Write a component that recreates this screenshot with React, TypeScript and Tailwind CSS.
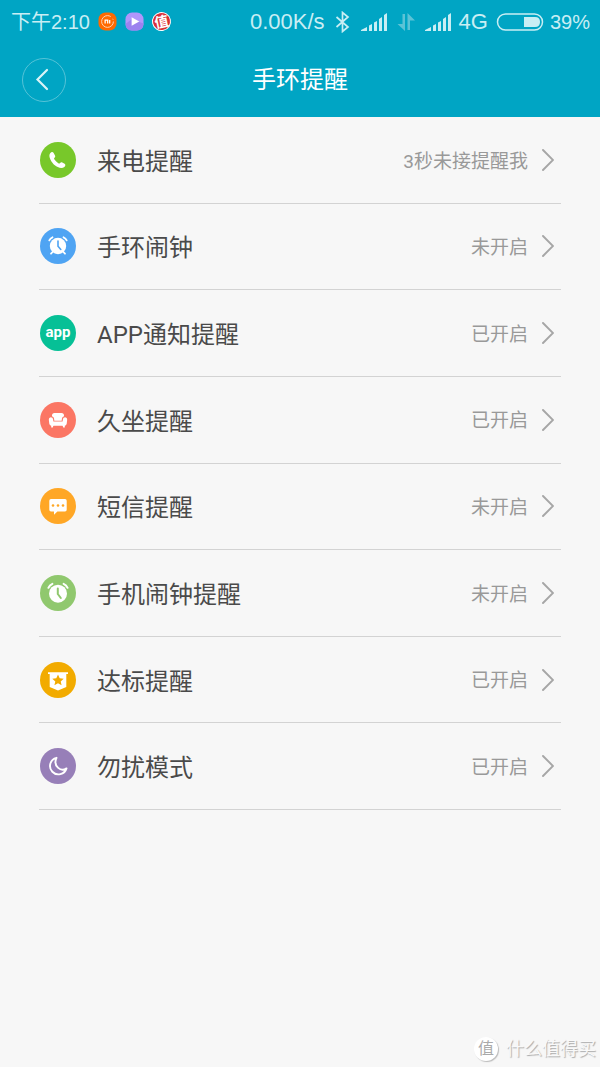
import type { ReactNode } from "react";

type Reminder = {
  id: string;
  title: string;
  status: string;
  icon: ReactNode;
};

function Disc({ color, children }: { color: string; children?: ReactNode }) {
  return (
    <svg viewBox="0 0 36 36" className="size-9 shrink-0" aria-hidden="true">
      <circle cx="18" cy="18" r="18" fill={color} />
      {children}
    </svg>
  );
}

function PhoneIcon() {
  return (
    <Disc color="#78c82a">
      <path
        d="M10.2 11.2c.9-1.3 2.5-1.7 3.3-.5l1.5 2.7c.5 1 .2 1.7-.5 2.3-.6.5-.6 1 0 1.9 1 1.5 2.3 2.7 3.8 3.6.8.5 1.3.4 1.8-.2.6-.7 1.3-.9 2.2-.5l2.3 1.3c1.2.8.9 2.3-.3 3.2-1.6 1.3-3.9 1.3-6.6.1-4-1.8-7.3-6.4-8.1-9.9-.4-1.7-.1-3 .6-4z"
        fill="#fff"
      />
    </Disc>
  );
}

function BandAlarmIcon() {
  return (
    <Disc color="#4fa4f3">
      <circle cx="18" cy="18" r="8.2" fill="#fff" />
      <g fill="none" stroke="#fff" strokeLinecap="round">
        <path d="M9.3 12.4q1-2.2 3.2-3.1M26.7 12.4q-1-2.2-3.2-3.1" strokeWidth="1.8" />
        <path d="M12.6 24L11 25.7M23.4 24l1.6 1.7" strokeWidth="1.8" />
      </g>
      <path d="M18 13v5.3l2.8 3.2" fill="none" stroke="#4fa4f3" strokeWidth="1.6" strokeLinecap="round" />
    </Disc>
  );
}

function AppIcon() {
  return (
    <span className="flex size-9 shrink-0 items-center justify-center rounded-full bg-[#06c096] pb-0.5 font-[Roboto] text-[15px] font-bold text-white">
      app
    </span>
  );
}

function SofaIcon() {
  return (
    <Disc color="#fb7664">
      <g fill="#fff">
        <path d="M14.5 11h7q2.5 0 2.5 2.5v.7q-2 .6-2.1 2.6l-.2 2h-7.4l-.2-2q-.1-2-2.1-2.6v-.7q0-2.5 2.5-2.5z" />
        <path d="M10.8 15.2q2.1 0 2.3 2.1l.3 2.3h9.2l.3-2.3q.2-2.1 2.3-2.1 2 .2 2 2.200l-.5 4.300q-.3 2-2.300 2H11.600q-2 0-2.300-2l-.5-4.300q0-2 2-2.200z" />
        <path d="M11.2 23h2.4l-.8 2.6h-1.600zM24.800 23h-2.400l.8 2.600h1.600z" />
      </g>
    </Disc>
  );
}

function MessageIcon() {
  return (
    <Disc color="#ffa726">
      <path
        d="M11 11h14q1.7 0 1.7 1.7v9q0 1.7-1.7 1.7h-7.6L14 26.8v-3.4h-3q-1.7 0-1.7-1.7v-9Q9.3 11 11 11z"
        fill="#fff"
      />
      <g fill="#ffa726">
        <circle cx="13" cy="17.5" r="1.3" />
        <circle cx="18" cy="17.5" r="1.3" />
        <circle cx="23" cy="17.5" r="1.3" />
      </g>
    </Disc>
  );
}

function PhoneAlarmIcon() {
  return (
    <Disc color="#90c86e">
      <circle cx="18" cy="18.7" r="9" fill="#fff" />
      <path
        d="M8.4 12.8q1.2-2.8 4-4M27.6 12.8q-1.2-2.8-4-4"
        fill="none"
        stroke="#fff"
        strokeWidth="2"
        strokeLinecap="round"
      />
      <path d="M17.8 13.5V19l3 4" fill="none" stroke="#90c86e" strokeWidth="2" strokeLinecap="round" />
    </Disc>
  );
}

function GoalIcon() {
  return (
    <Disc color="#f2ab00">
      <path d="M8 10.2h20V12h-1.7v13L18 28.5 9.700 25V12H8z" fill="#fff" />
      <path
        d="M18 12.6l1.7 3.7 4 .4-3 2.7.9 3.9-3.6-2-3.6 2 .9-3.9-3-2.700 4-.4z"
        fill="#f2ab00"
      />
    </Disc>
  );
}

function MoonIcon() {
  return (
    <Disc color="#977fb8">
      <path
        d="M16.5 9.8a8.4 8.4 0 1 0 10 10.6c-2.600 1.700-6 1.600-8.300-.5-2.900-2.600-3.300-6.700-1.700-10.100z"
        fill="none"
        stroke="#fff"
        strokeWidth="1.9"
        strokeLinejoin="round"
      />
    </Disc>
  );
}

const REMINDERS: Reminder[] = [
  { id: "call", title: "来电提醒", status: "3秒未接提醒我", icon: <PhoneIcon /> },
  { id: "band-alarm", title: "手环闹钟", status: "未开启", icon: <BandAlarmIcon /> },
  { id: "app", title: "APP通知提醒", status: "已开启", icon: <AppIcon /> },
  { id: "sit", title: "久坐提醒", status: "已开启", icon: <SofaIcon /> },
  { id: "sms", title: "短信提醒", status: "未开启", icon: <MessageIcon /> },
  { id: "phone-alarm", title: "手机闹钟提醒", status: "未开启", icon: <PhoneAlarmIcon /> },
  { id: "goal", title: "达标提醒", status: "已开启", icon: <GoalIcon /> },
  { id: "dnd", title: "勿扰模式", status: "已开启", icon: <MoonIcon /> },
];

function Signal() {
  return (
    <svg viewBox="0 0 26 18" className="h-[18px] w-[26px]" fill="currentColor" aria-hidden="true">
      <path d="M0 18v-1l6-3v4zM8 12.5l3-1.500v7H8zM13 9.500L16 8v10h-3zM18 6l3-2v14h-3zM23 2l3-2v18h-3z" />
    </svg>
  );
}

function StatusBar() {
  return (
    <div className="flex h-[43px] items-center justify-between pl-[11px] pr-[10px] text-[#c9eef4]">
      <div className="flex items-center gap-2">
        <span className="text-xl">下午2:10</span>
        <svg viewBox="0 0 20 20" className="size-[19px]" aria-hidden="true">
          <rect x=".5" y=".5" width="19" height="19" rx="7.5" fill="#ff6a00" />
          <circle cx="10" cy="10" r="6.2" fill="none" stroke="#ffd9bd" strokeWidth="1" strokeDasharray="32 3 1 3" />
          <path d="M7.5 12V8.600h2.700V12M12.300 8.500V12" fill="none" stroke="#fff" strokeWidth="1.3" />
        </svg>
        <svg viewBox="0 0 20 20" className="size-[19px]" aria-hidden="true">
          <rect x=".5" y=".5" width="19" height="19" rx="7" fill="#b196fb" />
          <path d="M.5 12.5l6.500-5L19.500 12v1q-1 6.500-7 6.500h-5Q1 19.500.5 12.500z" fill="#9c82ef" />
          <path d="M7 5.5l8 4.500-8 4.500z" fill="#fff" />
        </svg>
        <span className="flex size-[19px] -rotate-12 items-center justify-center rounded-full border border-white bg-[#d92f36] text-sm leading-none font-bold text-white">
          值
        </span>
      </div>
      <div className="flex items-center gap-2">
        <div className="flex items-center gap-[10px]">
          <span className="text-[22px]">0.00K/s</span>
          <svg viewBox="0 0 16 22" className="h-[22px] w-4" fill="none" stroke="currentColor" strokeWidth="1.7" aria-hidden="true">
            <path d="M1.500 6L13 16l-5.500 4.500v-19L13 6 1.500 16" />
          </svg>
          <Signal />
          <svg viewBox="0 0 18 18" className="size-[18px]" fill="#5cc3d6" aria-hidden="true">
            <path d="M5.500 1H8v17L.5 11h5zM10.500 17V0L18 7.500h-5V17z" />
          </svg>
          <Signal />
        </div>
        <span className="text-[22px]">4G</span>
        <svg viewBox="0 0 48 18" className="h-[18px] w-12" aria-hidden="true">
          <rect x="1.5" y="1" width="45" height="16" rx="8" fill="none" stroke="currentColor" strokeWidth="1.5" />
          <path d="M28 4h11q5 0 5 5t-5 5H28z" fill="currentColor" />
        </svg>
        <span className="-ml-0.5 text-xl">39%</span>
      </div>
    </div>
  );
}

function Header() {
  return (
    <header className="bg-[#00a5c4]">
      <StatusBar />
      <div className="grid h-[74px] grid-cols-[44px_1fr_44px] items-center px-[22px]">
        <button
          type="button"
          aria-label="返回"
          className="flex size-11 items-center justify-center rounded-full border border-[#55c3d7] text-[#d9f3f7]"
        >
          <svg viewBox="0 0 44 44" className="size-11 shrink-0" fill="none" stroke="currentColor" strokeWidth="2.2" strokeLinecap="round" aria-hidden="true">
            <path d="M25 12L15.500 21.500 25 31" />
          </svg>
        </button>
        <h1 className="text-center text-2xl text-white">手环提醒</h1>
      </div>
    </header>
  );
}

function ReminderRow({ item }: { item: Reminder }) {
  return (
    <li className="border-b border-[#d3d3d3]">
      <a
        href={`#${item.id}`}
        className="flex h-full items-center gap-[21px] pl-px pr-[7px] font-[Roboto,'Noto_Sans_CJK_SC',sans-serif]"
      >
        {item.icon}
        <span className="flex-1 pt-1 text-2xl text-[#4a4a4a]">{item.title}</span>
        <span className="flex items-center gap-[13px] text-[19px] text-[#999]">
          <span className="pt-1">{item.status}</span>
          <svg viewBox="0 0 13 24" className="h-6 w-[13px]" fill="none" stroke="#a6a6a6" strokeWidth="1.9" strokeLinecap="round" aria-hidden="true">
            <path d="M2 2l10 10L2 22" />
          </svg>
        </span>
      </a>
    </li>
  );
}

export default function App() {
  return (
    <div className="relative min-h-screen bg-[#f7f7f7] font-['Liberation_Sans','Noto_Sans_CJK_SC',sans-serif]">
      <Header />
      <main className="px-[39px]">
        <ul className="grid min-h-[693px] auto-rows-fr">
          {REMINDERS.map((item) => (
            <ReminderRow key={item.id} item={item} />
          ))}
        </ul>
      </main>
      <div className="absolute right-1 bottom-1 flex items-center gap-2 text-lg text-[#f9f9f9] [text-shadow:1px_1px_1px_#aaa]">
        <span className="flex size-6 items-center justify-center rounded-full bg-white text-base text-[#aaa] shadow-[1px_1px_1px_#bbb] [text-shadow:none]">
          值
        </span>
        <span>什么值得买</span>
      </div>
    </div>
  );
}
